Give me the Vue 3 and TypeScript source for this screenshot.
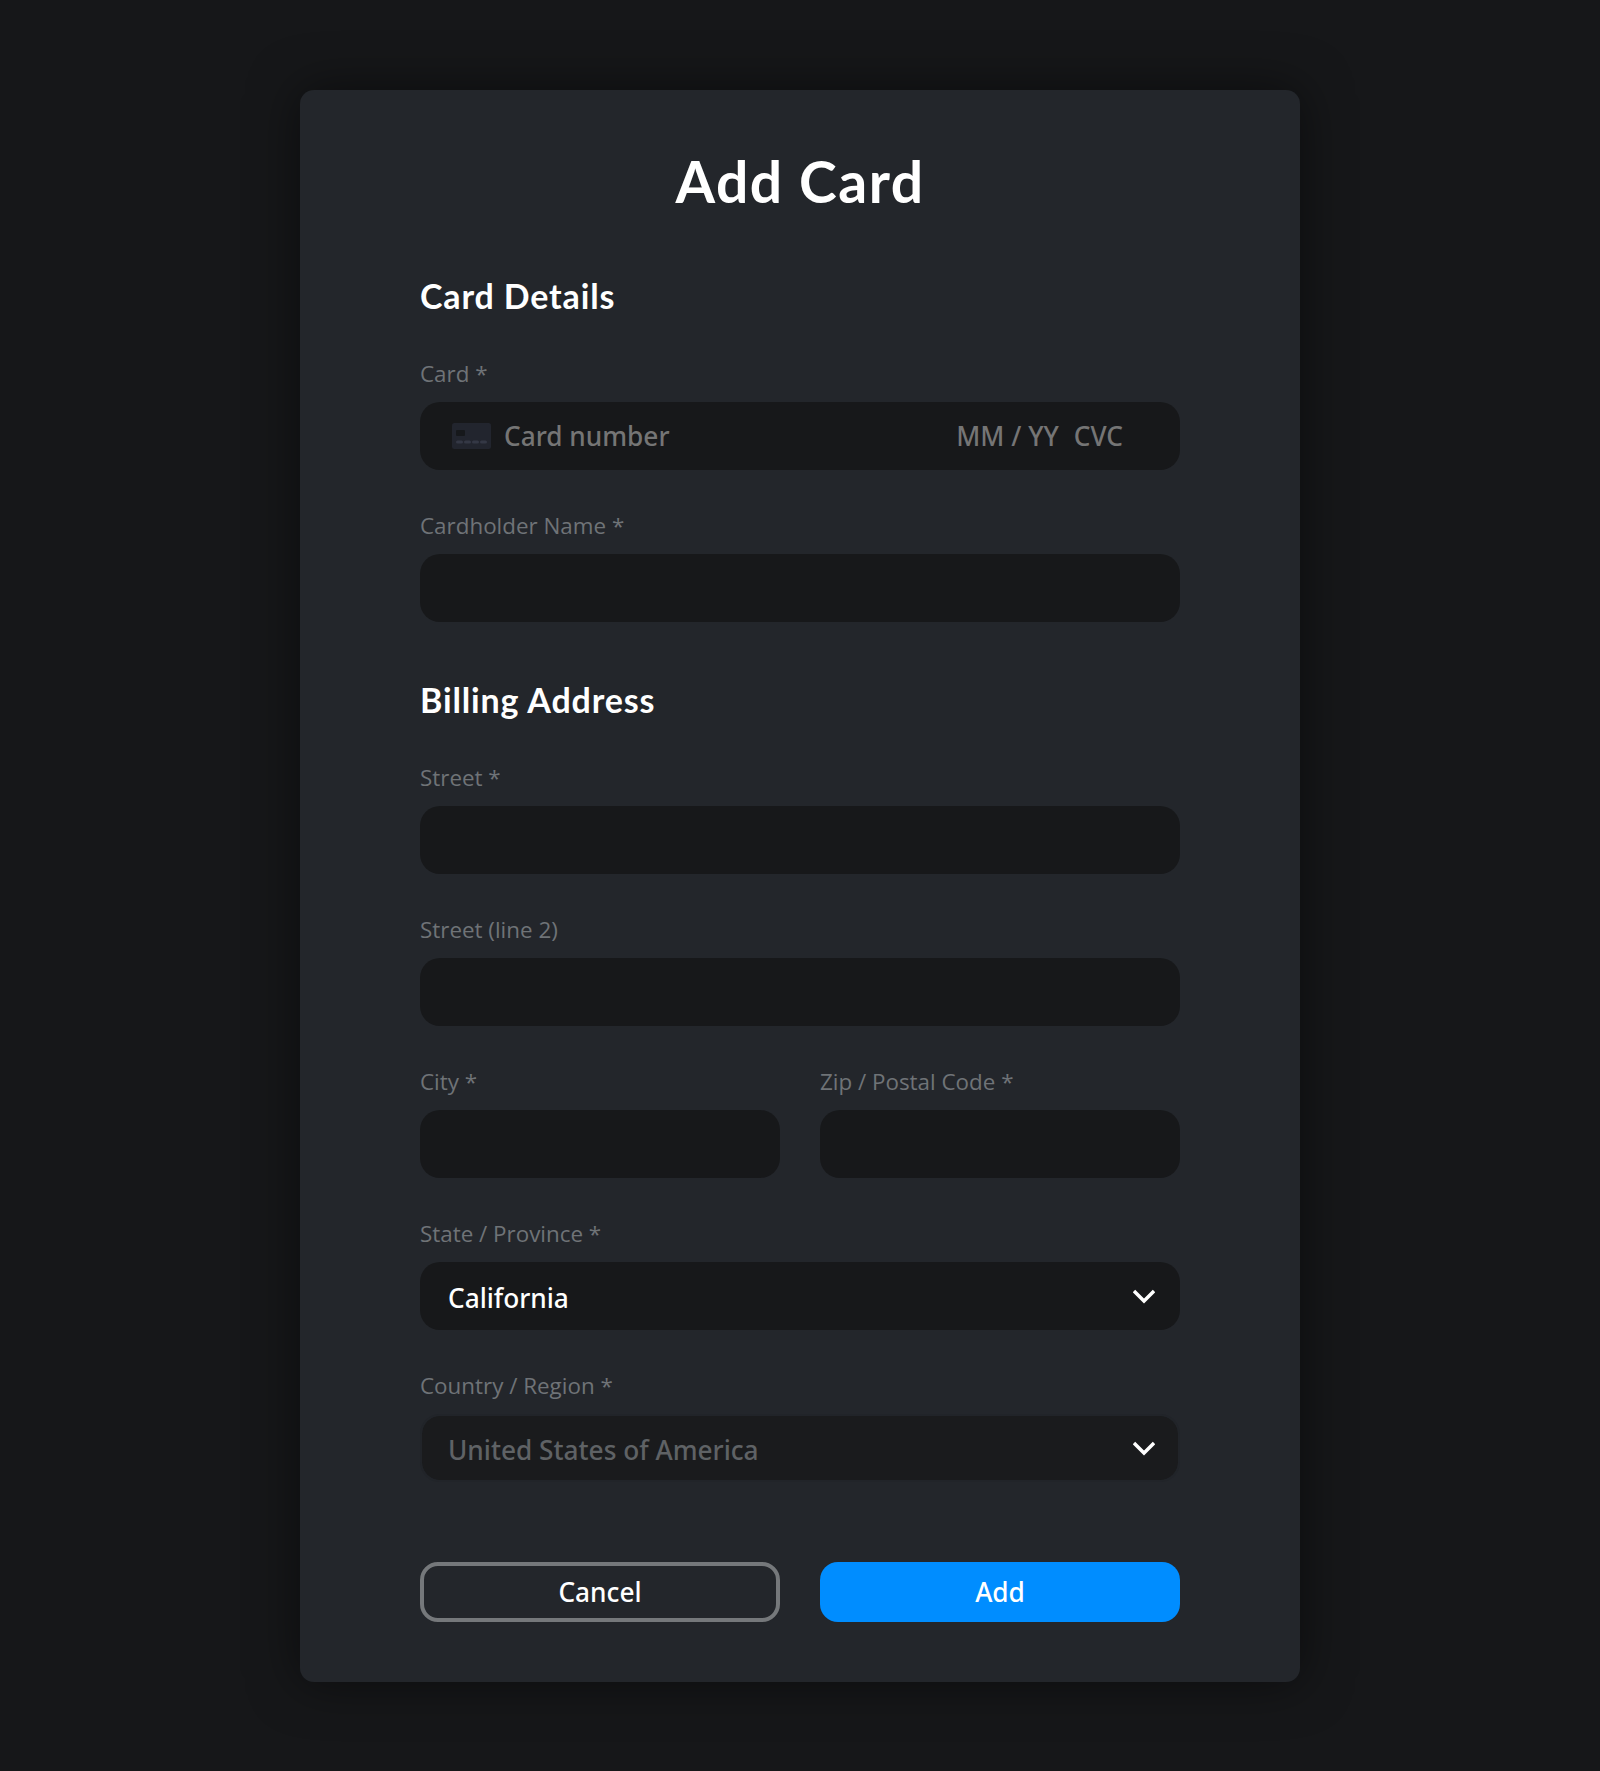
<script setup lang="ts">
const title = 'Add Card'
</script>

<template>
  <div class="page">
    <main class="card">
      <h1 class="title">{{ title }}</h1>

      <h2 class="heading">Card Details</h2>
      <div class="group">
        <label class="label">Card *</label>
        <div class="field card-field">
          <svg class="card-icon" width="39" height="26" viewBox="0 0 39 26">
            <rect width="39" height="26" rx="2.5" fill="#22252e" />
            <rect x="4" y="7" width="9" height="6" rx="1" fill="#16181b" />
            <g fill="#343845">
              <rect x="4" y="17.5" width="7" height="3" rx="1.5" />
              <rect x="12" y="17.5" width="7" height="3" rx="1.5" />
              <rect x="20" y="17.5" width="7" height="3" rx="1.5" />
              <rect x="28" y="17.5" width="7" height="3" rx="1.5" />
            </g>
          </svg>
          <span class="ph number">Card number</span>
          <span class="ph expiry">MM / YY</span>
          <span class="ph cvc">CVC</span>
        </div>
      </div>
      <div class="group">
        <label class="label">Cardholder Name *</label>
        <input class="field" />
      </div>

      <h2 class="heading second">Billing Address</h2>
      <div class="group">
        <label class="label">Street *</label>
        <input class="field" />
      </div>
      <div class="group">
        <label class="label">Street (line 2)</label>
        <input class="field" />
      </div>
      <div class="columns">
        <div class="group">
          <label class="label">City *</label>
          <input class="field" />
        </div>
        <div class="group">
          <label class="label">Zip / Postal Code *</label>
          <input class="field" />
        </div>
      </div>
      <div class="group">
        <label class="label">State / Province *</label>
        <div class="field select">
          <span class="value">California</span>
          <svg class="chevron" width="22" height="15" viewBox="0 0 22 15">
            <path d="M1 2 L11 12 L21 2" fill="none" stroke="#fff" stroke-width="3.4" />
          </svg>
        </div>
      </div>
      <div class="group">
        <label class="label">Country / Region *</label>
        <div class="field select disabled">
          <span class="value">United States of America</span>
          <svg class="chevron" width="22" height="15" viewBox="0 0 22 15">
            <path d="M1 2 L11 12 L21 2" fill="none" stroke="#fff" stroke-width="3.4" />
          </svg>
        </div>
      </div>

      <div class="actions">
        <button class="btn cancel" type="button">Cancel</button>
        <button class="btn add" type="button">Add</button>
      </div>
    </main>
  </div>
</template>

<style>
html, body { margin: 0; background: #161719; }
</style>

<style scoped>
.page {
  min-height: 1771px;
  box-sizing: border-box;
  padding-top: 90px;
  display: flex;
  justify-content: center;
  align-items: flex-start;
  background: #161719;
  font-family: "Noto Sans", "Open Sans", sans-serif;
}
.card {
  width: 1000px;
  height: 1592px;
  box-sizing: border-box;
  padding: 57px 120px 60px;
  background: #23262b;
  border-radius: 14px;
  box-shadow: 0 0 50px rgba(0, 0, 0, 0.5);
}
.title {
  margin: 0 0 61px;
  font: 700 57px/68px Lato, sans-serif;
  letter-spacing: 1.5px;
  color: #fff;
  text-align: center;
}
.heading {
  margin: 0 0 42px;
  font: 700 34px/40px Lato, sans-serif;
  letter-spacing: 0.85px;
  color: #fff;
}
.heading.second { margin-top: 58px; }
.group { margin-bottom: 40px; }
.label {
  display: block;
  height: 32px;
  margin-bottom: 12px;
  font-family: "Open Sans", "Noto Sans", sans-serif;
  font-size: 22.4px;
  line-height: 31.5px;
  color: #6f7377;
}
.field {
  display: block;
  width: 100%;
  height: 68px;
  box-sizing: border-box;
  border: none;
  outline: none;
  border-radius: 20px;
  background: #17181a;
}
.card-field {
  display: flex;
  align-items: center;
  padding-left: 32px;
}
.card-icon { flex: none; }
.ph {
  font-size: 26.24px;
  font-weight: 500;
  color: #757575;
}
.number { margin-left: 13px; }
.expiry { margin-left: auto; }
.cvc { margin-left: 15px; margin-right: 57px; }
.columns {
  display: grid;
  grid-template-columns: 1fr 1fr;
  gap: 40px;
}
.select {
  display: flex;
  align-items: center;
  justify-content: space-between;
  padding: 0 25px 0 28px;
  font-size: 26.24px;
  font-weight: 500;
  color: #fff;
}
.value { padding-top: 4px; }
.disabled {
  background-color: #1a1b1d;
  background-clip: padding-box;
  border: 2px solid #212429;
  padding: 0 23px 0 26px;
}
.disabled .value { color: #5f6265; }
.actions {
  display: grid;
  grid-template-columns: 1fr 1fr;
  gap: 40px;
  margin-top: 80px;
}
.btn {
  height: 60px;
  box-sizing: border-box;
  border-radius: 18px;
  font-family: inherit;
  font-size: 26.24px;
  font-weight: 500;
  color: #fff;
  cursor: pointer;
}
.cancel {
  background: transparent;
  border: 4px solid #75787b;
}
.add {
  background: #008dff;
  border: none;
}
</style>
